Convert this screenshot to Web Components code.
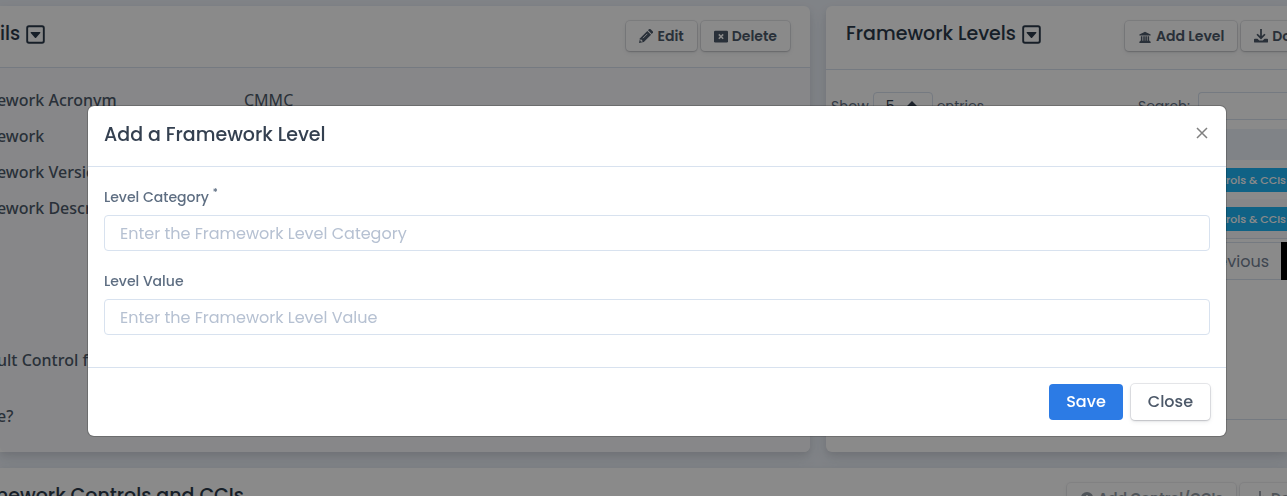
<!DOCTYPE html>
<html lang="en">
<head>
<meta charset="utf-8">
<meta name="viewport" content="width=device-width, initial-scale=1">
<title>Framework Levels</title>
<style>
html, body { margin: 0; height: 100%; }
body { overflow: hidden; background: #edf2f9; color: #344050; font-family: Poppins, Inter, sans-serif; }
</style>
</head>
<body>
<framework-page></framework-page>
<level-modal heading="Add a Framework Level">
  <text-field label="Level Category" placeholder="Enter the Framework Level Category" required></text-field>
  <text-field label="Level Value" placeholder="Enter the Framework Level Value"></text-field>
  <ui-button slot="actions" kind="primary">Save</ui-button>
  <ui-button slot="actions" kind="large">Close</ui-button>
</level-modal>
<script>
const ICONS = {
  pencil: '<path d="M0 16l1.200-5.500L9.500 2.200l4.300 4.300-8.300 8.300z" fill="currentColor"/><path d="M10.300 1.400l1-1a1.400 1.400 0 0 1 2 0l2.300 2.300a1.400 1.400 0 0 1 0 2l-1 1z" fill="currentColor"/><path d="M4.500 10.500L9.500 5.500" stroke="#fff" stroke-width="1"/><path d="M2 11.500l2.500 2.500-2 .6-1.100-1.100z" fill="#fff"/>',
  close: '<rect x="0" y="2" width="16" height="13.500" rx="1.500" fill="currentColor"/><path d="M5.500 6.200l5 5M10.500 6.200l-5 5" stroke="#fff" stroke-width="1.800"/>',
  bank: '<path d="M8 1l7.500 3.500V6H.5V4.500zM1.500 13h13v1h1v2H.5v-2h1zM2.500 7h2v6h-2zM5.700 7h2v6h-2zM8.500 7h2v6h-2zM11.500 7h2v6h-2z" fill="currentColor"/>',
  download: '<path d="M8 0v10M3.500 6L8 10.500 12.500 6" fill="none" stroke="currentColor" stroke-width="2"/><path d="M1 11h3l2 2h4l2-2h3a1 1 0 0 1 1 1v2.500a1 1 0 0 1-1 1H1a1 1 0 0 1-1-1V12a1 1 0 0 1 1-1z" fill="currentColor"/>',
  plus: '<circle cx="8" cy="8" r="7" fill="currentColor"/><path d="M4.500 8h7M8 4.500v7" stroke="#fff" stroke-width="2"/>',
  caret: '<rect x="1" y="1" width="14" height="14" rx="1.500" fill="none" stroke="currentColor" stroke-width="1.600"/><path d="M4.200 5.800h7.600q.6.400.2 1L8.500 10.800q-.5.500-1 0L4 6.800q-.4-.6.2-1z" fill="currentColor"/>'
};
function define(name, render) {
  customElements.define(name, class extends HTMLElement {
    connectedCallback() {
      if (this.shadowRoot) return;
      const t = document.createElement('template');
      t.innerHTML = render(this);
      this.attachShadow({ mode: 'open' }).append(t.content.cloneNode(true));
    }
  });
}
define('ui-icon', el => `<style>
  :host { display: inline-block; width: 14px; height: 14px; flex: none; }
  svg { display: block; width: 100%; height: 100%; }
  :host([name=bank]) svg { box-sizing: border-box; padding: 2px 1px 0; }
</style><svg viewBox="0 0 16 16" aria-hidden="true">${ICONS[el.getAttribute('name')]}</svg>`);

define('ui-button', () => `<style>
  :host { display: inline-block; flex: none; }
  button { display: flex; align-items: center; gap: 4px; height: 30px; padding: 0 13px; border: 0; border-radius: 4px;
    background: #fff; color: #4d5969; font: 600 14px/20px Poppins, Inter, sans-serif; white-space: nowrap;
    box-shadow: 0 0 0 1px rgba(43,45,80,.1), 0 2px 5px rgba(43,45,80,.08), 0 1px 2px rgba(0,0,0,.15); }
  :host([kind=large]) button, :host([kind=primary]) button { height: 36px; padding: 0 17px; font-size: 16px; font-weight: 500; }
  :host([kind=primary]) button { background: #2c7be5; color: #fff; box-shadow: none; }
  :host([faded]) button { opacity: .6; }
</style><button type="button"><slot></slot></button>`);

define('ui-card', () => `<style>
  :host { display: flex; flex-direction: column; min-width: 0; border-radius: 6px; background: #fff;
    box-shadow: 0 7px 14px rgba(65,69,88,.1), 0 3px 6px rgba(0,0,0,.07); }
  header { display: flex; justify-content: space-between; gap: 16px; height: var(--head, 61px); padding: 15px 20px 0;
    box-sizing: border-box; overflow: hidden; border-bottom: 1px solid #d8e2ef; }
  .title { display: flex; align-items: center; gap: 6px; height: 26px; font-size: 19px; font-weight: 500;
    line-height: 26px; color: #2c3a4b; white-space: nowrap; }
  .tools { display: flex; gap: 4px; flex: none; width: var(--tools, auto); }
</style>
<header><div class="title"><slot name="title"></slot></div><div class="tools"><slot name="tools"></slot></div></header>
<slot></slot>`);

define('detail-list', () => `<style>
  :host { display: block; flex: 1; padding: 14px 0 18px; background: #f9fafd; border-radius: 0 0 6px 6px;
    font-family: "Noto Sans", sans-serif; font-size: 16px; color: #4d5969; }
  dl { margin: 0; }
  div { display: grid; grid-template-columns: 244px 1fr; line-height: 36px; min-height: 36px; }
  .tall { min-height: 152px; } .mid { min-height: 56px; }
  dt { font-weight: 500; white-space: nowrap; margin-left: -3px; } dd { margin: 0; }
</style><dl>
<div><dt>ework Acronym</dt><dd>CMMC</dd></div>
<div><dt>ework</dt></div>
<div><dt>ework Version</dt></div>
<div class="tall"><dt>ework Description</dt></div>
<div class="mid"><dt>ult Control for All</dt></div>
<div><dt>e?</dt></div></dl>`);

define('level-table', () => `<style>
  :host { display: flex; flex-direction: column; flex: 1; overflow: hidden; padding-top: 22px; font-size: 14px; color: #5e6e82; }
  .bar { display: flex; justify-content: space-between; padding-left: 5px; height: 28px; margin-bottom: 9px; }
  label { display: flex; align-items: center; gap: 4px; }
  label.find { gap: 8px; }
  select, input { box-sizing: border-box; height: 28px; border: 1px solid #d8e2ef; border-radius: 4px; background: #fff;
    font: 14px Poppins, Inter, sans-serif; color: #344050; }
  .pick { display: grid; align-items: center; }
  select { grid-area: 1/1; appearance: none; width: 60px; padding: 0 12px; }
  .pick svg { grid-area: 1/1; justify-self: end; margin: 2px 16px 0 0; pointer-events: none; }
  input { width: 89px; border-right: 0; border-radius: 4px 0 0 4px; }
  table { width: 100%; border-collapse: collapse; border-bottom: 1px solid #d8e2ef; }
  th { height: 31px; padding: 0; background: #edf2f9; }
  td { height: 39px; padding: 0; text-align: right; }
  tr:nth-child(2) td { background: #f9fafd; }
  a.tag { display: inline-block; background: #1fb5f5; color: #fff; font-size: 11px; font-weight: 500; line-height: 24px;
    padding: 0 1px 0 8px; text-decoration: none; vertical-align: middle; }
  nav { display: flex; justify-content: flex-end; margin: 3px 0 139px; }
  nav button { height: 38px; box-sizing: border-box; padding: 0 12px; border: 1px solid #d8e2ef; border-right: 0; background: #fff;
    font: 16px Poppins, Inter, sans-serif; color: #748194; }
  nav button.on { width: 6px; padding: 0; background: #000; border-color: #000; }
  footer { height: 31px; border-top: 1px solid #d8e2ef; }
</style>
<div class="bar"><label>Show <span class="pick"><select aria-label="Entries per page"><option>5</option></select>
<svg width="10" height="12" viewBox="0 0 10 12"><path d="M0 5l5-5 5 5zM0 7l5 5 5-5z" fill="#344050"/></svg></span> entries</label>
<label class="find">Search: <input type="search" aria-label="Search"></label></div>
<table><thead><tr><th scope="col" aria-label="Actions"></th></tr></thead>
<tbody><tr><td><a class="tag" href="#">Controls &amp; CCIs</a></td></tr><tr><td><a class="tag" href="#">Controls &amp; CCIs</a></td></tr></tbody></table>
<nav><button type="button">Previous</button><button type="button" class="on" aria-label="Page 1"></button></nav>
<footer></footer>`);

define('framework-page', () => `<style>
  :host { display: block; height: 100%; overflow: hidden; }
  main { display: grid; grid-template-columns: 810fr 461fr; gap: 16px; padding-top: 6px; }
  .details { --head: 62px; border-radius: 0 6px 6px 0; }
  .name { margin-left: -20px; }
  .controls .name { margin-left: -24px; }
  .levels { --head: 64px; --tools: 142px; border-radius: 6px 0 0 6px; }
  .controls { grid-column: 1 / -1; --tools: 200px; border-radius: 0; }
  ui-icon.mark { width: 19px; height: 19px; }
</style>
<main>
<ui-card class="details"><span slot="title" class="name">ils</span><ui-icon slot="title" class="mark" name="caret"></ui-icon>
<ui-button slot="tools"><ui-icon name="pencil"></ui-icon>Edit</ui-button><ui-button slot="tools"><ui-icon name="close"></ui-icon>Delete</ui-button>
<detail-list></detail-list></ui-card>
<ui-card class="levels"><span slot="title">Framework Levels</span><ui-icon slot="title" class="mark" name="caret"></ui-icon>
<ui-button slot="tools"><ui-icon name="bank"></ui-icon>Add Level</ui-button><ui-button slot="tools"><ui-icon name="download"></ui-icon>Download</ui-button>
<level-table></level-table></ui-card>
<ui-card class="controls"><span slot="title" class="name">nework Controls and CCIs</span>
<ui-button slot="tools" faded><ui-icon name="plus"></ui-icon>Add Control/CCIs</ui-button><ui-button slot="tools" faded><ui-icon name="download"></ui-icon>Download</ui-button></ui-card>
</main>`);

define('text-field', el => `<style>
  :host { display: block; }
  label { display: block; margin-bottom: 8px; font-size: 14px; font-weight: 500; line-height: 20px; color: #5e6e82; }
  sup { font-size: 10px; line-height: 0; }
  input { display: block; box-sizing: border-box; width: 100%; height: 36px; padding: 0 15px; border: 1px solid #d8e2ef;
    border-radius: 4px; background: #fff; color: #344050; font: 16px Poppins, Inter, sans-serif; }
  input::placeholder { color: #b6c1d2; opacity: 1; }
</style><label for="box">${el.getAttribute('label')}${el.hasAttribute('required') ? ' <sup>*</sup>' : ''}</label>
<input id="box" type="text" placeholder="${el.getAttribute('placeholder')}">`);

define('level-modal', el => `<style>
  :host { display: block; position: fixed; inset: 0; overflow: hidden; padding: 105px 60px 0 87px; background: rgba(0,0,0,.46); }
  section { border: 1px solid rgba(0,0,0,.2); border-radius: 7px; background: #fff; background-clip: padding-box; }
  header { display: flex; justify-content: space-between; height: 60px; padding: 0 16px; border-bottom: 1px solid #d8e2ef; }
  h2 { margin: 0; font-size: 19px; font-weight: 500; line-height: 58px; color: #344050; }
  header button { align-self: center; margin-bottom: 6px; padding: 0; border: 0; background: none; width: 16px; height: 16px; }
  header svg { display: block; }
  form { display: flex; flex-direction: column; gap: 20px; padding: 20px 16px 32px; }
  footer { display: flex; justify-content: flex-end; gap: 8px; padding: 16px; border-top: 1px solid #d8e2ef; }
</style>
<section role="dialog" aria-modal="true" aria-labelledby="heading"><header><h2 id="heading">${el.getAttribute('heading')}</h2>
<button type="button" aria-label="Close dialog"><svg width="16" height="16" viewBox="0 0 16 16"><path d="M3 3l10 10M13 3L3 13" stroke="#808080" stroke-width="1.500"/></svg></button></header>
<form><slot></slot></form><footer><slot name="actions"></slot></footer></section>`);
</script>
</body>
</html>
